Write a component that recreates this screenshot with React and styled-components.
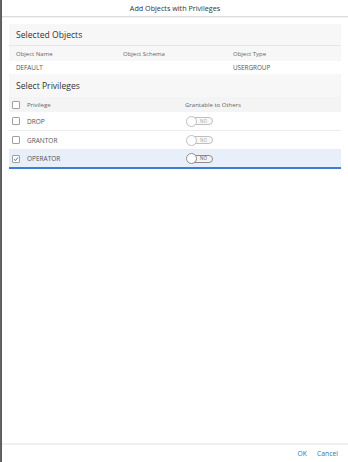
import React from "react";
import styled, { createGlobalStyle } from "styled-components";

const Global = createGlobalStyle`
  html, body { margin: 0; padding: 0; background: #fff; }
  body { font-family: "Open Sans", "Liberation Sans", sans-serif; color: #333; }
  * { box-sizing: border-box; }
`;

const Frame = styled.div`
  display: flex;
  width: 348px;
  height: 462px;
  overflow: hidden;
`;

const Edge = styled.div`
  width: 2px;
  flex: none;
  background: linear-gradient(to right, #8a8a8a 0, #3c3c3c 50%, #7a7a7a 100%);
`;

const Dialog = styled.div`
  flex: 1;
  display: flex;
  flex-direction: column;
  background: #fff;
`;

const Header = styled.div`
  height: 17px;
  flex: none;
  display: flex;
  align-items: center;
  justify-content: center;
  font-size: 7.2px;
  color: #333;
  border-bottom: 1px solid #dcdcdc;
  box-shadow: 0 1px 0 #f2f2f2;
`;

const Content = styled.div`
  flex: 1;
  padding: 7px 7px 0 7px;
`;

const Panel = styled.div`
  background: #f7f7f7;
`;

const SectionTitle = styled.div`
  height: ${(p) => p.$h}px;
  display: flex;
  align-items: center;
  padding-left: 7px;
  font-size: 8.6px;
  color: #333;
  border-bottom: ${(p) => (p.$line ? "1px solid #e6e6e6" : "none")};
`;

const Grid = styled.div`
  display: grid;
  grid-template-columns: 107px 110px 1fr;
  align-items: center;
  padding-left: 7px;
  height: ${(p) => p.$h}px;
  background: ${(p) => p.$bg};
  font-size: ${(p) => p.$fs}px;
  color: ${(p) => p.$color};
`;

const PrivRow = styled.div`
  display: grid;
  grid-template-columns: 15px 158px 1fr;
  align-items: center;
  padding-left: 3px;
  height: ${(p) => p.$h}px;
  background: ${(p) => (p.$selected ? "#e7f0fa" : p.$head ? "#f4f4f4" : "#fff")};
  border-bottom: ${(p) =>
    p.$selected ? "2px solid #3a7fd0" : p.$head ? "none" : "1px solid #ececec"};
  font-size: ${(p) => (p.$head ? 6 : 6.5)}px;
  color: ${(p) => (p.$head ? "#666" : "#555")};
`;

const Box = styled.span`
  width: 8px;
  height: 8px;
  border: 1px solid #a0a0a0;
  border-radius: 1px;
  background: #fff;
  display: inline-flex;
  align-items: center;
  justify-content: center;
`;

const Toggle = styled.span`
  position: relative;
  display: inline-flex;
  align-items: center;
  width: 27px;
  height: 10px;
  margin-left: 1px;
  opacity: ${(p) => (p.$dim ? 0.55 : 1)};
`;

const Track = styled.span`
  position: absolute;
  left: 4px;
  right: 0;
  top: 1px;
  height: 8px;
  border: 1px solid #8c8c8c;
  border-radius: 4px;
  background: #f3f3f3;
  font-size: 4.5px;
  color: #555;
  display: flex;
  align-items: center;
  justify-content: flex-end;
  padding-right: 5px;
  line-height: 1;
`;

const Knob = styled.span`
  position: absolute;
  left: 0;
  top: -0.5px;
  width: 11px;
  height: 11px;
  border-radius: 50%;
  border: 1px solid #8c8c8c;
  background: #fff;
`;

const Footer = styled.div`
  height: 19px;
  flex: none;
  border-top: 2px solid #f0f0f0;
  display: flex;
  align-items: center;
  justify-content: flex-end;
  gap: 10px;
  padding-right: 10px;
`;

const Link = styled.span`
  font-size: 6.8px;
  color: #3a6fb5;
`;

const Check = () => (
  <svg width="6" height="6" viewBox="0 0 6 6">
    <path d="M1 3.2 L2.5 4.6 L5 1.4" fill="none" stroke="#2d6bbf" strokeWidth="0.9" />
  </svg>
);

const Switch = ({ dim }) => (
  <Toggle $dim={dim}>
    <Track>NO</Track>
    <Knob />
  </Toggle>
);

const privileges = [
  { name: "DROP", checked: false },
  { name: "GRANTOR", checked: false },
  { name: "OPERATOR", checked: true },
];

export default function App() {
  return (
    <>
      <Global />
      <Frame>
        <Edge />
        <Dialog>
          <Header>Add Objects with Privileges</Header>
          <Content>
            <Panel>
              <SectionTitle $h={22} $line>Selected Objects</SectionTitle>
              <Grid $h={15} $bg="#f7f7f7" $fs={6} $color="#666">
                <span>Object Name</span>
                <span>Object Schema</span>
                <span>Object Type</span>
              </Grid>
              <Grid $h={13} $bg="#fff" $fs={6.3} $color="#555">
                <span>DEFAULT</span>
                <span></span>
                <span>USERGROUP</span>
              </Grid>
              <SectionTitle $h={23}>Select Privileges</SectionTitle>
            </Panel>
            <PrivRow $head $h={15}>
              <Box />
              <span>Privilege</span>
              <span>Grantable to Others</span>
            </PrivRow>
            {privileges.map((p) => (
              <PrivRow key={p.name} $selected={p.checked} $h={19}>
                <Box>{p.checked && <Check />}</Box>
                <span>{p.name}</span>
                <Switch dim={!p.checked} />
              </PrivRow>
            ))}
          </Content>
          <Footer>
            <Link>OK</Link>
            <Link>Cancel</Link>
          </Footer>
        </Dialog>
      </Frame>
    </>
  );
}
